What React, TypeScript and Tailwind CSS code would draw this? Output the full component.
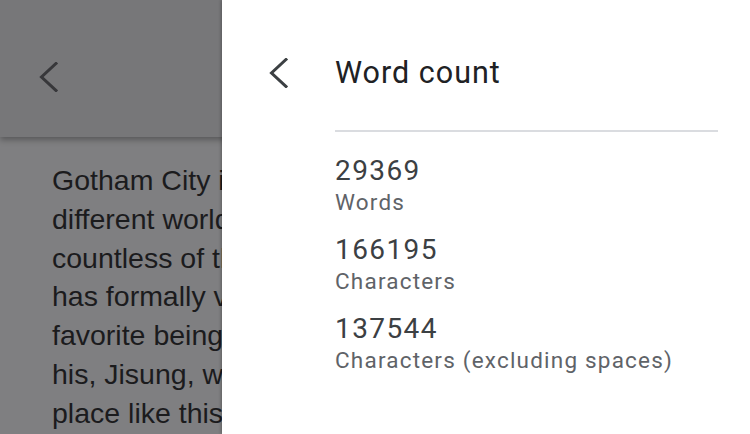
import { ReactNode } from "react";

const LINES = [
  "Gotham City is a very",
  "different world from the",
  "countless of the others he",
  "has formally visited, his",
  "favorite being the one of",
  "his, Jisung, who lived in a",
  "place like this one",
];

const STATS = [
  { value: "29369", label: "Words" },
  { value: "166195", label: "Characters" },
  { value: "137544", label: "Characters (excluding spaces)" },
];

function Chevron({ className }: { className?: string }) {
  return (
    <svg viewBox="0 0 20 30" className={className} fill="none">
      <path
        d="M18 1.5 L3.5 15 L18 28.5"
        stroke="currentColor"
        strokeWidth="3"
        strokeLinecap="square"
      />
    </svg>
  );
}

function Stat({ value, label }: { value: string; label: ReactNode }) {
  return (
    <div className="flex flex-col">
      <div className="text-[28px] leading-[34px] text-[#3c4043] tracking-[1.4px]">{value}</div>
      <div className="text-[22.5px] leading-[28px] text-[#5f6368] tracking-[1.2px]">
        {label}
      </div>
    </div>
  );
}

export default function App() {
  return (
    <div className="relative w-[750px] h-[434px] overflow-hidden bg-[#7f7f81]">
      {/* Document behind the drawer (dimmed) */}
      <div className="flex flex-col h-full">
        <div className="relative z-10 h-[137px] bg-[#777779] shadow-[0_3px_6px_rgba(0,0,0,0.3)] flex items-start pt-[62px] pl-[38px]">
          <Chevron className="w-[20px] h-[30px] text-[#37373a]" />
        </div>
        <div
          className="pl-[52px] pt-[24px] text-[28.5px] leading-[38.8px] text-[#1b1b1d] whitespace-nowrap"
          style={{ fontFamily: '"Liberation Sans", Arial, sans-serif' }}
        >
          {LINES.map((line) => (
            <div key={line}>{line}</div>
          ))}
        </div>
      </div>

      {/* Word count drawer */}
      <div
        className="absolute top-0 right-0 bottom-0 w-[528px] bg-white shadow-[-1px_0_3px_rgba(0,0,0,0.25)] z-20 flex flex-col"
        style={{ fontFamily: "Roboto, 'Noto Sans', sans-serif" }}
      >
        <div className="h-[130px] flex items-start">
          <div className="w-[113px] flex pl-[46px] pt-[58px]">
            <Chevron className="w-[20px] h-[30px] text-[#3c4043]" />
          </div>
          <div className="pt-[54px] text-[30.5px] leading-[38px] text-[#202124] tracking-[1px]">
            Word count
          </div>
        </div>
        <div className="ml-[113px] mr-[32px] border-t-2 border-[#dadce0]" />
        <div className="ml-[113px] pt-[22px] flex flex-col gap-[17px]">
          {STATS.map((s) => (
            <Stat key={s.value} value={s.value} label={s.label} />
          ))}
        </div>
      </div>
    </div>
  );
}
